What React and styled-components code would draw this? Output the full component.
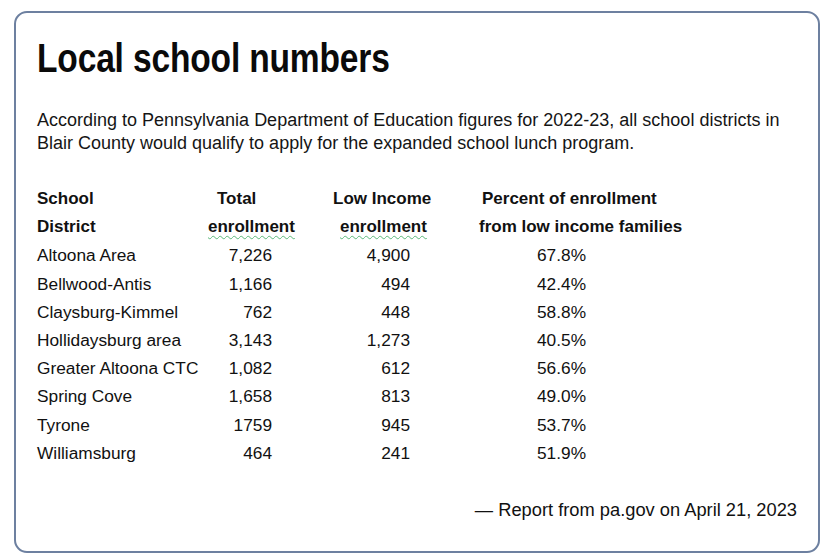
import React from 'react';
import styled, { createGlobalStyle } from 'styled-components';

const GlobalStyle = createGlobalStyle`
  html, body {
    margin: 0;
    padding: 0;
    background: #fff;
  }
  body {
    width: 833px;
    height: 559px;
    overflow: hidden;
    font-family: "Liberation Sans", Arial, sans-serif;
    color: #111;
  }
`;

const Page = styled.div`
  padding: 11px 13px 6px 14px;
  box-sizing: border-box;
  width: 833px;
  height: 559px;
`;

const Card = styled.div`
  box-sizing: border-box;
  height: 542px;
  border: 2px solid #6d80a0;
  border-radius: 13px;
  padding: 21px 21px 0 21px;
  display: flex;
  flex-direction: column;
`;

const Title = styled.h1`
  margin: 0;
  font-family: "Liberation Sans", Arial, sans-serif;
  font-weight: 700;
  font-size: 41px;
  line-height: 48px;
  letter-spacing: -0.2px;
  color: #0a0a0a;
  transform: scaleX(0.818);
  transform-origin: left center;
  white-space: nowrap;
`;

const Intro = styled.p`
  margin: 27px 0 0 0;
  font-size: 18px;
  line-height: 23px;
  color: #151515;
`;

const Table = styled.div`
  margin-top: 30px;
  display: grid;
  grid-template-columns: 163px 100px 166px 1fr;
  line-height: 28.2px;
  font-size: 17.3px;
`;

const Head = styled.div`
  font-weight: 700;
  font-size: 17px;
  padding-left: ${(p) => p.$pl || 0}px;
  white-space: nowrap;
`;

const Squiggle = styled.span`
  text-decoration: underline wavy #5bb87a;
  text-decoration-thickness: 1px;
  text-underline-offset: 3px;
`;

const Cell = styled.div`
  text-align: ${(p) => p.$align || 'left'};
  padding-right: ${(p) => p.$pr || 0}px;
  padding-left: ${(p) => p.$pl || 0}px;
  white-space: nowrap;
`;

const Source = styled.div`
  margin-top: auto;
  margin-bottom: 30px;
  text-align: right;
  font-size: 18.3px;
  line-height: 23px;
`;

const rows = [
  ['Altoona Area', '7,226', '4,900', '67.8%'],
  ['Bellwood-Antis', '1,166', '494', '42.4%'],
  ['Claysburg-Kimmel', '762', '448', '58.8%'],
  ['Hollidaysburg area', '3,143', '1,273', '40.5%'],
  ['Greater Altoona CTC', '1,082', '612', '56.6%'],
  ['Spring Cove', '1,658', '813', '49.0%'],
  ['Tyrone', '1759', '945', '53.7%'],
  ['Williamsburg', '464', '241', '51.9%'],
];

function App() {
  return (
    <Page>
      <GlobalStyle />
      <Card>
        <Title>Local school numbers</Title>
        <Intro>
          According to Pennsylvania Department of Education figures for 2022-23, all school districts in
          <br />
          Blair County would qualify to apply for the expanded school lunch program.
        </Intro>

        <Table>
          <Head>School</Head>
          <Head $pl={17}>Total</Head>
          <Head $pl={33}>Low Income</Head>
          <Head $pl={16}>Percent of enrollment</Head>

          <Head>District</Head>
          <Head $pl={8}><Squiggle>enrollment</Squiggle></Head>
          <Head $pl={40}><Squiggle>enrollment</Squiggle></Head>
          <Head $pl={13}>from low income families</Head>

          {rows.map(([name, total, low, pct]) => (
            <React.Fragment key={name}>
              <Cell>{name}</Cell>
              <Cell $align="right" $pr={28}>{total}</Cell>
              <Cell $align="right" $pr={56}>{low}</Cell>
              <Cell $pl={71}>{pct}</Cell>
            </React.Fragment>
          ))}
        </Table>

        <Source>— Report from pa.gov on April 21, 2023</Source>
      </Card>
    </Page>
  );
}

export default App;
